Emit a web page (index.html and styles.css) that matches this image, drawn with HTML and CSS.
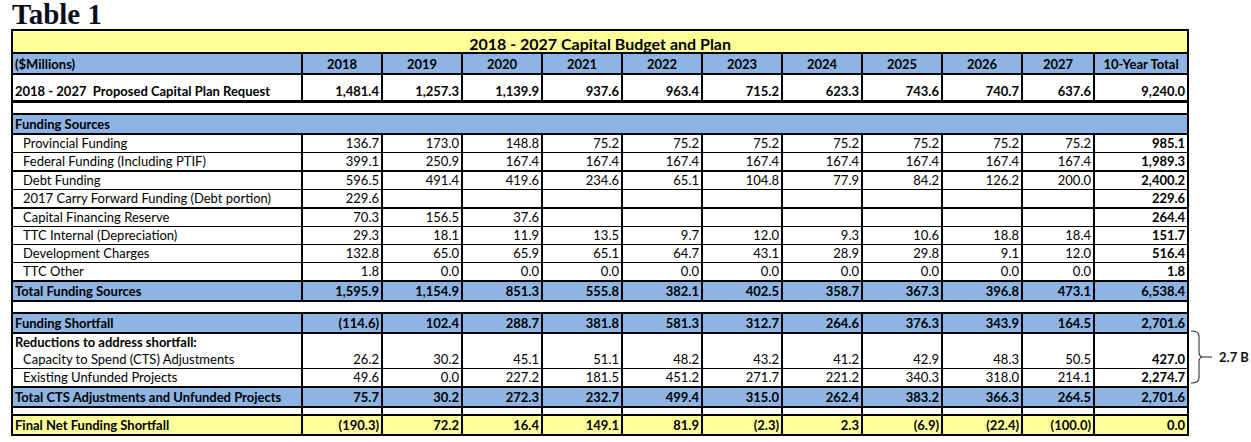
FILE: index.html
```html
<!DOCTYPE html>
<html lang="en">
<head>
<meta charset="utf-8">
<title>Table 1</title>
<link rel="stylesheet" href="styles.css">
</head>
<body>
<h1 class="doc-title">Table 1</h1>
<div class="sheet">
<table class="budget">
  <colgroup>
    <col class="c-label">
    <col class="c-year"><col class="c-year"><col class="c-year"><col class="c-year"><col class="c-year">
    <col class="c-year"><col class="c-year"><col class="c-year"><col class="c-year">
    <col class="c-last">
    <col class="c-total">
  </colgroup>
  <tbody>
    <tr class="r-title"><td colspan="12">2018 - 2027 Capital Budget and Plan</td></tr>
    <tr class="r-head">
      <td class="lbl">($Millions)</td>
      <td>2018</td><td>2019</td><td>2020</td><td>2021</td><td>2022</td><td>2023</td><td>2024</td><td>2025</td><td>2026</td><td>2027</td><td>10-Year Total</td>
    </tr>
    <tr class="r-req bold">
      <td class="lbl">2018 - 2027&nbsp; Proposed Capital Plan Request</td>
      <td>1,481.4</td><td>1,257.3</td><td>1,139.9</td><td>937.6</td><td>963.4</td><td>715.2</td><td>623.3</td><td>743.6</td><td>740.7</td><td>637.6</td><td>9,240.0</td>
    </tr>
    <tr class="r-gap r-gap-a"><td colspan="12"></td></tr>
    <tr class="r-section"><td colspan="12" class="lbl">Funding Sources</td></tr>
    <tr class="r-data">
      <td class="lbl ind">Provincial Funding</td>
      <td>136.7</td><td>173.0</td><td>148.8</td><td>75.2</td><td>75.2</td><td>75.2</td><td>75.2</td><td>75.2</td><td>75.2</td><td>75.2</td><td class="tot">985.1</td>
    </tr>
    <tr class="r-data">
      <td class="lbl ind">Federal Funding (Including PTIF)</td>
      <td>399.1</td><td>250.9</td><td>167.4</td><td>167.4</td><td>167.4</td><td>167.4</td><td>167.4</td><td>167.4</td><td>167.4</td><td>167.4</td><td class="tot">1,989.3</td>
    </tr>
    <tr class="r-data thick-top">
      <td class="lbl ind">Debt Funding</td>
      <td>596.5</td><td>491.4</td><td>419.6</td><td>234.6</td><td>65.1</td><td>104.8</td><td>77.9</td><td>84.2</td><td>126.2</td><td>200.0</td><td class="tot">2,400.2</td>
    </tr>
    <tr class="r-data">
      <td class="lbl ind">2017 Carry Forward Funding (Debt portion)</td>
      <td>229.6</td><td></td><td></td><td></td><td></td><td></td><td></td><td></td><td></td><td></td><td class="tot">229.6</td>
    </tr>
    <tr class="r-data thick-top">
      <td class="lbl ind">Capital Financing Reserve</td>
      <td>70.3</td><td>156.5</td><td>37.6</td><td></td><td></td><td></td><td></td><td></td><td></td><td></td><td class="tot">264.4</td>
    </tr>
    <tr class="r-data">
      <td class="lbl ind">TTC Internal (Depreciation)</td>
      <td>29.3</td><td>18.1</td><td>11.9</td><td>13.5</td><td>9.7</td><td>12.0</td><td>9.3</td><td>10.6</td><td>18.8</td><td>18.4</td><td class="tot">151.7</td>
    </tr>
    <tr class="r-data">
      <td class="lbl ind">Development Charges</td>
      <td>132.8</td><td>65.0</td><td>65.9</td><td>65.1</td><td>64.7</td><td>43.1</td><td>28.9</td><td>29.8</td><td>9.1</td><td>12.0</td><td class="tot">516.4</td>
    </tr>
    <tr class="r-data">
      <td class="lbl ind">TTC Other</td>
      <td>1.8</td><td>0.0</td><td>0.0</td><td>0.0</td><td>0.0</td><td>0.0</td><td>0.0</td><td>0.0</td><td>0.0</td><td>0.0</td><td class="tot">1.8</td>
    </tr>
    <tr class="r-sum bold">
      <td class="lbl">Total Funding Sources</td>
      <td>1,595.9</td><td>1,154.9</td><td>851.3</td><td>555.8</td><td>382.1</td><td>402.5</td><td>358.7</td><td>367.3</td><td>396.8</td><td>473.1</td><td>6,538.4</td>
    </tr>
    <tr class="r-gap r-gap-a"><td colspan="12"></td></tr>
    <tr class="r-sum bold">
      <td class="lbl">Funding Shortfall</td>
      <td>(114.6)</td><td>102.4</td><td>288.7</td><td>381.8</td><td>581.3</td><td>312.7</td><td>264.6</td><td>376.3</td><td>343.9</td><td>164.5</td><td>2,701.6</td>
    </tr>
    <tr class="r-reduce">
      <td class="lbl bold">Reductions to address shortfall:</td>
      <td></td><td></td><td></td><td></td><td></td><td></td><td></td><td></td><td></td><td></td><td></td>
    </tr>
    <tr class="r-data r-cont">
      <td class="lbl ind">Capacity to Spend (CTS) Adjustments</td>
      <td>26.2</td><td>30.2</td><td>45.1</td><td>51.1</td><td>48.2</td><td>43.2</td><td>41.2</td><td>42.9</td><td>48.3</td><td>50.5</td><td class="tot">427.0</td>
    </tr>
    <tr class="r-data">
      <td class="lbl ind">Existing Unfunded Projects</td>
      <td>49.6</td><td>0.0</td><td>227.2</td><td>181.5</td><td>451.2</td><td>271.7</td><td>221.2</td><td>340.3</td><td>318.0</td><td>214.1</td><td class="tot">2,274.7</td>
    </tr>
    <tr class="r-sum bold">
      <td class="lbl">Total CTS Adjustments and Unfunded Projects</td>
      <td>75.7</td><td>30.2</td><td>272.3</td><td>232.7</td><td>499.4</td><td>315.0</td><td>262.4</td><td>383.2</td><td>366.3</td><td>264.5</td><td>2,701.6</td>
    </tr>
    <tr class="r-gap r-gap-b">
      <td></td><td></td><td></td><td></td><td></td><td></td><td></td><td></td><td></td><td></td><td></td><td></td>
    </tr>
    <tr class="r-final bold">
      <td class="lbl">Final Net Funding Shortfall</td>
      <td>(190.3)</td><td>72.2</td><td>16.4</td><td>149.1</td><td>81.9</td><td>(2.3)</td><td>2.3</td><td>(6.9)</td><td>(22.4)</td><td>(100.0)</td><td>0.0</td>
    </tr>
  </tbody>
</table>
<div class="note">
  <svg class="brace" width="24" height="54" viewBox="0 0 24 54" aria-hidden="true">
    <path d="M1 1 Q9 1 9 6 L9 22 Q9 27 13 27 Q9 27 9 32 L9 48 Q9 53 1 53" fill="none" stroke="#333" stroke-width="1.1"/>
    <path d="M13 27 L22 27" fill="none" stroke="#333" stroke-width="1.1"/>
  </svg>
  <span class="note-text">2.7 B</span>
</div>
</div>
</body>
</html>
```

FILE: styles.css
```css
html, body {
  margin: 0;
  padding: 0;
  background: #ffffff;
}

body {
  padding: 0 0 0 11px;
}

.doc-title {
  margin: 0 0 0 1px;
  height: 29px;
  font-family: "Liberation Serif", "Times New Roman", serif;
  font-size: 29px;
  line-height: 29px;
  font-weight: bold;
  color: #0c0c1c;
}

.sheet {
  position: relative;
  width: 1240px;
}

.budget {
  border-collapse: collapse;
  table-layout: fixed;
  width: 1176px;
  font-family: Lato, "Liberation Sans", sans-serif;
  font-size: 13px;
  color: #000;
}

.c-label { width: 290px; }
.c-year { width: 80px; }
.c-last { width: 72px; }
.c-total { width: 94px; }

.budget td {
  border-left: 2px solid #000;
  border-right: 2px solid #000;
  border-top: 1px solid #000;
  border-bottom: 1px solid #000;
  padding: 0 2px 1px 2px;
  text-align: right;
  vertical-align: bottom;
  white-space: nowrap;
  overflow: hidden;
  line-height: 15px;
}

.budget td.lbl {
  text-align: left;
  padding-left: 2px;
}

.budget td.ind {
  padding-left: 10px;
}

.bold td, td.bold, td.tot {
  font-weight: bold;
}

.r-title td {
  background: #ffff99;
  text-align: center;
  font-weight: bold;
  font-size: 16px;
  border: 2px solid #000;
  height: 20px;
}

.r-head td {
  background: #8db4e2;
  font-weight: bold;
  text-align: center;
  border-top: 2px solid #000;
  border-bottom: 2px solid #000;
  height: 18px;
}

.r-head td.lbl {
  text-align: left;
}

.r-req td {
  height: 24px;
  border-bottom: 3px solid #000;
}

.r-gap td {
  height: 10px;
  padding: 0;
  border-top: 2px solid #000;
  border-bottom: 2px solid #000;
}

.r-gap-b td {
  height: 6px;
}

.r-section td {
  background: #8db4e2;
  font-weight: bold;
  height: 17px;
  border-top: 2px solid #000;
  border-bottom: 2px solid #000;
}

.r-data td {
  height: 16px;
}

.thick-top td {
  border-top: 2px solid #000;
}

.r-sum td {
  background: #8db4e2;
  height: 17px;
  border-top: 2px solid #000;
  border-bottom: 2px solid #000;
}

.r-reduce td {
  height: 16px;
  border-bottom-style: hidden;
}

.r-cont td {
  border-top-style: hidden;
}

.r-final td {
  background: #ffff99;
  height: 17px;
  border-top: 2px solid #000;
  border-bottom: 2px solid #000;
}

.note {
  position: absolute;
  left: 1179px;
  top: 301px;
  display: flex;
  align-items: center;
  gap: 5px;
  height: 54px;
}

.brace {
  display: block;
}

.note-text {
  font-family: Lato, "Liberation Sans", sans-serif;
  font-weight: bold;
  font-size: 13px;
  color: #111;
}
```
